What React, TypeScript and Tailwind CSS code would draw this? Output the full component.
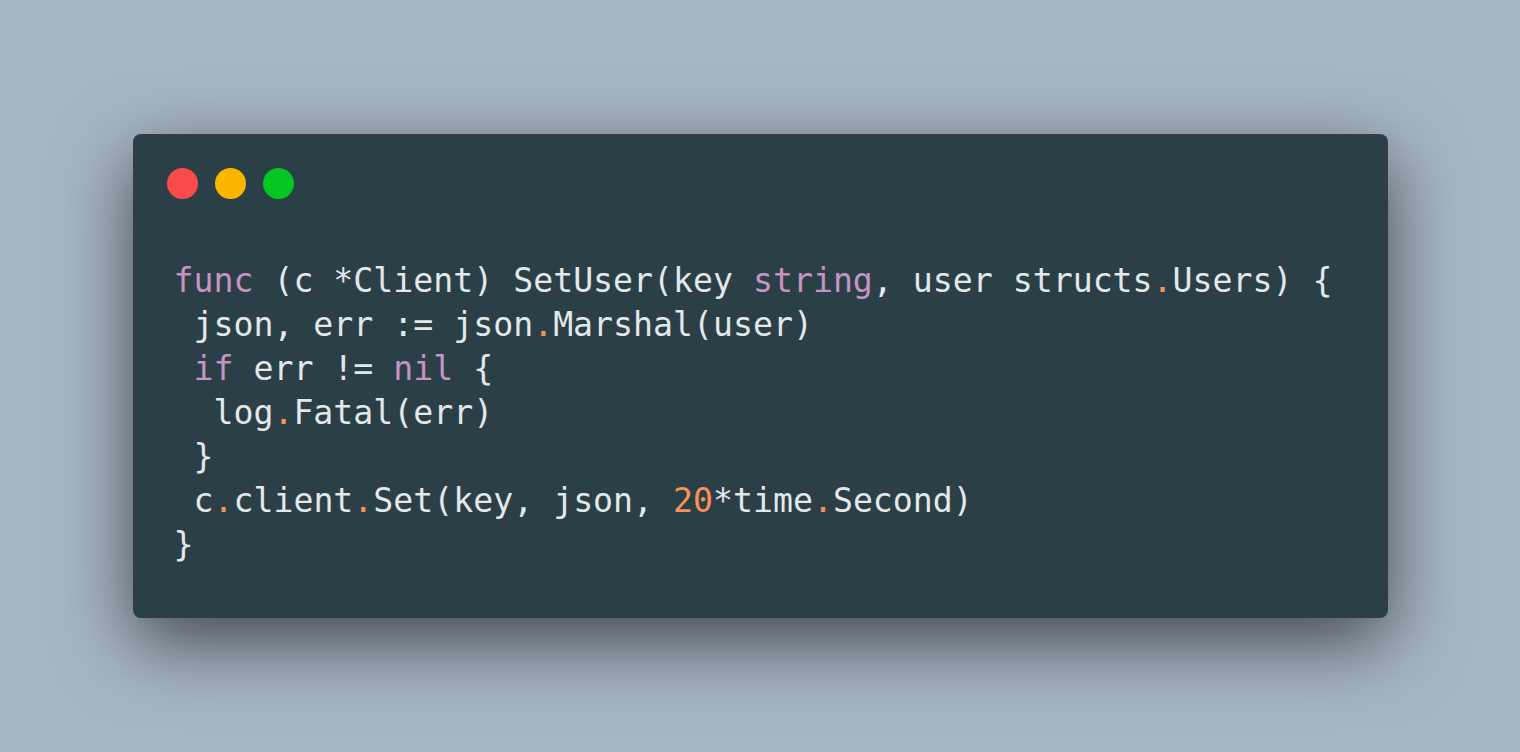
import React from 'react';

type Tok = { t: string; c?: 'kw' | 'op' };

const lines: Tok[][] = [
  [
    { t: 'func', c: 'kw' },
    { t: ' (c *Client) SetUser(key ' },
    { t: 'string', c: 'kw' },
    { t: ', user structs' },
    { t: '.', c: 'op' },
    { t: 'Users) {' },
  ],
  [{ t: ' json, err := json' }, { t: '.', c: 'op' }, { t: 'Marshal(user)' }],
  [{ t: ' ' }, { t: 'if', c: 'kw' }, { t: ' err != ' }, { t: 'nil', c: 'kw' }, { t: ' {' }],
  [{ t: '  log' }, { t: '.', c: 'op' }, { t: 'Fatal(err)' }],
  [{ t: ' }' }],
  [
    { t: ' c' },
    { t: '.', c: 'op' },
    { t: 'client' },
    { t: '.', c: 'op' },
    { t: 'Set(key, json, ' },
    { t: '20', c: 'op' },
    { t: '*time' },
    { t: '.', c: 'op' },
    { t: 'Second)' },
  ],
  [{ t: '}' }],
];

const App: React.FC = () => {
  return (
    <div className="h-screen w-full bg-[#a7b5c3] flex items-center justify-center">
      {/* Window */}
      <div className="w-[1255px] h-[484px] bg-[#2b3f47] rounded-[8px] shadow-[0_24px_72px_rgba(0,0,0,0.6)] flex flex-col">
        <div className="flex gap-[17px] pl-[34px] pt-[34px]">
          <span className="w-[31px] h-[31px] rounded-full bg-[#fa4a4b]"></span>
          <span className="w-[31px] h-[31px] rounded-full bg-[#fdb600]"></span>
          <span className="w-[31px] h-[31px] rounded-full bg-[#04c722]"></span>
        </div>
        <pre className="pl-[41px] pt-[60px] text-[33.2px] leading-[44px] text-[#e3e8ea] font-['DejaVu_Sans_Mono',monospace]">
          {lines.map((line, i) => (
            <div key={i}>
              {line.map((tok, j) => (
                <span
                  key={j}
                  className={
                    tok.c === 'kw' ? 'text-[#c594c5]' : tok.c === 'op' ? 'text-[#f99157]' : undefined
                  }
                >
                  {tok.t}
                </span>
              ))}
            </div>
          ))}
        </pre>
      </div>
    </div>
  );
};

export default App;
